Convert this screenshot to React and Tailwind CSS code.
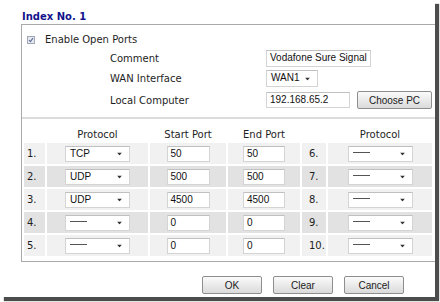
import React from "react";

const Arrow = () => (
  <svg width="5" height="3" viewBox="0 0 5 3" className="absolute right-[7px] top-1/2 -translate-y-1/2">
    <path d="M0 0 H5 L2.5 3 Z" fill="#333" />
  </svg>
);

const Select = ({ value, w }) => (
  <div
    className={`relative h-[16px] ${w} bg-white border border-[#d4d4d4] border-t-[#c0c0c0] font-['Liberation_Sans',Arial,sans-serif] text-[10px] leading-[14px] pl-[4px] text-[#111] whitespace-nowrap`}
  >
    {value === "-" ? (
      <span className="inline-block align-middle w-[17px] h-[1px] bg-[#555] mt-[-2px]" />
    ) : (
      value
    )}
    <Arrow />
  </div>
);

const Input = ({ value, w }) => (
  <div
    className={`h-[16px] ${w} bg-white border border-[#d4d4d4] border-t-[#c0c0c0] font-['Liberation_Sans',Arial,sans-serif] text-[10px] leading-[14px] pl-[3px] text-[#111] whitespace-nowrap overflow-hidden`}
  >
    {value}
  </div>
);

const Button = ({ children, w }) => (
  <div
    className={`h-[18px] ${w} rounded-[2px] border border-[#8e8e8e] bg-gradient-to-b from-[#fbfbfb] to-[#dadada] flex items-center justify-center font-['Liberation_Sans',Arial,sans-serif] text-[10px] text-[#1a1a1a]`}
  >
    {children}
  </div>
);

const rows = [
  { n: "1.", p: "TCP", s: "50", e: "50", n2: "6." },
  { n: "2.", p: "UDP", s: "500", e: "500", n2: "7." },
  { n: "3.", p: "UDP", s: "4500", e: "4500", n2: "8." },
  { n: "4.", p: "-", s: "0", e: "0", n2: "9." },
  { n: "5.", p: "-", s: "0", e: "0", n2: "10." },
];

export default function App() {
  return (
    <div className="w-[440px] h-[302px] bg-white overflow-hidden font-['DejaVu_Sans',Verdana,sans-serif] text-[10px] text-[#1e1e1e]">
      <div className="w-[435px] h-[297px] bg-white shadow-[4px_4px_1px_rgba(0,0,0,0.7)] pt-[11px]">
        <div className="ml-[22px] h-[12px] leading-[12px] font-bold text-[#13138c]">Index No. 1</div>
        <div className="ml-[21px] mt-[1px] w-[414px] h-[238px] border-l border-t border-b border-[#a9a9a9]">
          {/* enable row */}
          <div className="flex items-center h-[12px] mt-[9px] pl-[5px]">
            <svg width="8" height="8" viewBox="0 0 8 8">
              <rect x="0.5" y="0.5" width="7" height="7" fill="#e6e9f0" stroke="#a2a8b6" />
              <path d="M2 4 L3.4 5.6 L6 2.2" fill="none" stroke="#5c6b92" strokeWidth="1.1" />
            </svg>
            <span className="ml-[10px] leading-[12px]">Enable Open Ports</span>
          </div>
          {/* form rows */}
          <div className="flex flex-col gap-[3px] mt-[4px]">
            <div className="flex items-center h-[17px]">
              <div className="w-[244px] pl-[88px]">Comment</div>
              <Input value="Vodafone Sure Signal" w="w-[105px] h-[17px]" />
            </div>
            <div className="flex items-center h-[17px]">
              <div className="w-[244px] pl-[88px]">WAN Interface</div>
              <Select value="WAN1" w="w-[52px] h-[17px]" />
            </div>
            <div className="flex items-center h-[18px] mt-[1px]">
              <div className="w-[244px] pl-[88px]">Local Computer</div>
              <Input value="192.168.65.2" w="w-[84px]" />
              <div className="ml-[7px]">
                <Button w="w-[75px]">Choose PC</Button>
              </div>
            </div>
          </div>
          <div className="mt-[8px] h-[2px] bg-[#dcdcdc]" />
          {/* table */}
          <div className="ml-[2px] mt-[1px] grid grid-cols-[21px_101px_76px_72px_24px_104px] gap-[2px] auto-rows-[21px]">
            <div />
            <div className="text-center pt-[7px]">Protocol</div>
            <div className="text-center pt-[7px]">Start Port</div>
            <div className="text-center pt-[7px]">End Port</div>
            <div />
            <div className="text-center pt-[7px]">Protocol</div>
            {rows.map((r, i) => {
              const bg = i % 2 === 0 ? "bg-[#f1f1f1]" : "bg-[#e2e2e2]";
              return (
                <React.Fragment key={i}>
                  <div className={`${bg} flex items-center pl-[3px]`}>{r.n}</div>
                  <div className={`${bg} flex items-center justify-center`}>
                    <Select value={r.p} w="w-[65px]" />
                  </div>
                  <div className={`${bg} flex items-center justify-center`}>
                    <Input value={r.s} w="w-[43px]" />
                  </div>
                  <div className={`${bg} flex items-center justify-center`}>
                    <Input value={r.e} w="w-[42px]" />
                  </div>
                  <div className={`${bg} flex items-center pl-[7px]`}>{r.n2}</div>
                  <div className={`${bg} flex items-center justify-center`}>
                    <Select value="-" w="w-[65px]" />
                  </div>
                </React.Fragment>
              );
            })}
          </div>
        </div>
        <div className="flex mt-[14px] ml-[202px] gap-[11px]">
          <Button w="w-[60px]">OK</Button>
          <Button w="w-[60px]">Clear</Button>
          <Button w="w-[60px]">Cancel</Button>
        </div>
      </div>
    </div>
  );
}
